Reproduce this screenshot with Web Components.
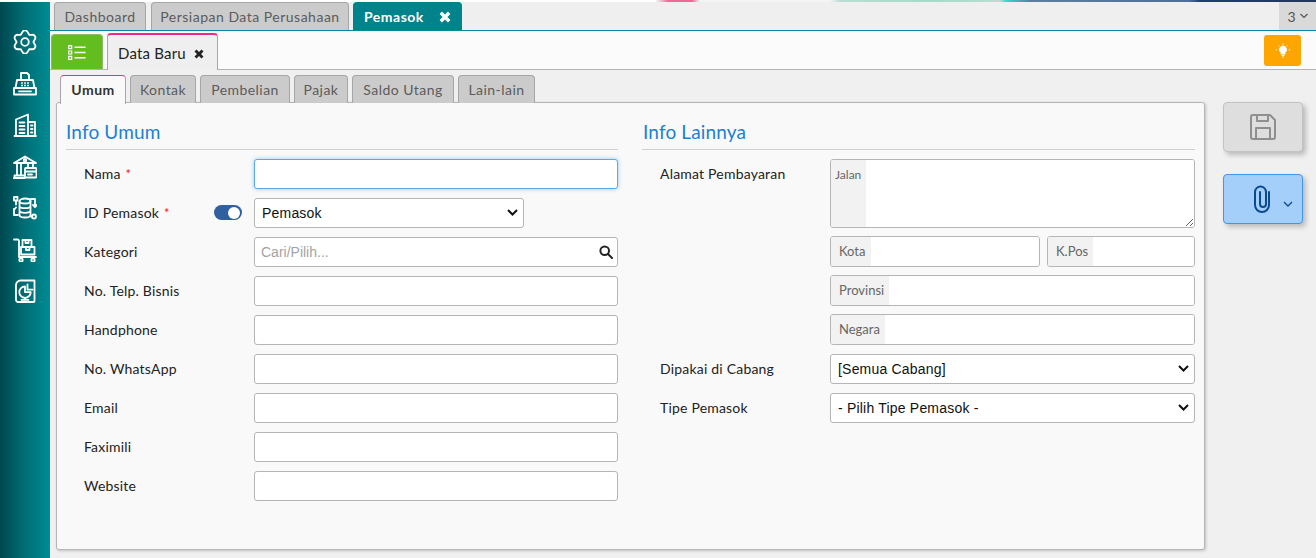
<!DOCTYPE html>
<html>
<head>
<meta charset="utf-8">
<title>Pemasok</title>
<style>
html, body { margin: 0; padding: 0; height: 100%; overflow: hidden; }
body { font-family: Lato, "Liberation Sans", sans-serif; font-size: 14px; background: #f0f0f0; color: #222; }
</style>
</head>
<body>
<app-shell>
    <side-bar slot="side"></side-bar>
    <doc-tabs slot="top"></doc-tabs>
    <tool-bar slot="top"></tool-bar>
    <sub-tabs slot="top"></sub-tabs>
    <div slot="main">
        <form-panel>
            <form-column slot="left" heading="Info Umum">
                <form-row label="Nama" required><text-box focused></text-box></form-row>
                <form-row label="ID Pemasok" required toggle><select-box width="270px" value="Pemasok"></select-box></form-row>
                <form-row label="Kategori"><search-box placeholder="Cari/Pilih..."></search-box></form-row>
                <form-row label="No. Telp. Bisnis"><text-box></text-box></form-row>
                <form-row label="Handphone"><text-box></text-box></form-row>
                <form-row label="No. WhatsApp"><text-box></text-box></form-row>
                <form-row label="Email"><text-box></text-box></form-row>
                <form-row label="Faximili"><text-box></text-box></form-row>
                <form-row label="Website"><text-box></text-box></form-row>
            </form-column>
            <form-column slot="right" heading="Info Lainnya">
                <form-row label="Alamat Pembayaran">
                    <addr-group>
                        <addon-box label="Jalan" multi></addon-box>
                        <div style="display:grid;grid-template-columns:210px 1fr;gap:7px">
                            <addon-box label="Kota"></addon-box>
                            <addon-box label="K.Pos"></addon-box>
                        </div>
                        <addon-box label="Provinsi"></addon-box>
                        <addon-box label="Negara"></addon-box>
                    </addr-group>
                </form-row>
                <form-row label="Dipakai di Cabang"><select-box value="[Semua Cabang]"></select-box></form-row>
                <form-row label="Tipe Pemasok"><select-box value="- Pilih Tipe Pemasok -"></select-box></form-row>
            </form-column>
        </form-panel>
        <side-actions></side-actions>
    </div>
</app-shell>

<script>
class Base extends HTMLElement {
    render(html) {
        let shadowRoot = this.attachShadow({ mode: 'open' })
        shadowRoot.innerHTML = html
    }
}

class AppShell extends Base {
    connectedCallback() {
        this.render(`
        <style>
            :host { display: block; height: 558px; }
            .strip {
                height: 2px;
                background: linear-gradient(90deg, #fff 0, #fff 655px, #ee6a96 668px, #ee6a96 692px, #f4f4f4 700px, #f4f4f4 830px,
                    #b9dcd4 840px, #a5dcc6 930px, #b9dcd4 1000px, #35dcc8 1006px, #5d7f9f 1030px, #4d6f96 1190px, #1f3d70 1200px, #26375a 1316px);
            }
            .row { display: flex; height: 556px; }
            .content { flex: 1; min-width: 0; display: flex; flex-direction: column; }
            ::slotted([slot=main]) { display: flex; align-items: flex-start; }
        </style>
        <div class="strip"></div>
        <div class="row">
            <slot name="side"></slot>
            <div class="content">
                <slot name="top"></slot>
                <slot name="main"></slot>
            </div>
        </div>`)
    }
}

// six lobed gear outline
function gearPath() {
    let pt = (r, deg) => {
        let a = deg * Math.PI / 180
        return (12 + r * Math.cos(a)).toFixed(2) + ' ' + (12 + r * Math.sin(a)).toFixed(2)
    }
    let d = ''
    for (let i = 0; i < 6; i++) {
        let t = i * 60 - 90
        d += (i == 0 ? 'M' : 'L') + pt(8.4, t - 30) + 'L' + pt(10.2, t - 15) + 'A2.9 2.9 0 0 1 ' + pt(10.2, t + 15)
    }
    return d + 'Z'
}

const sideIcons = [
    `<path d="${gearPath()}"/><circle cx="12" cy="12" r="3.800"/>`,
    // fax
    `<path d="M8 8V1h6l2 2v5"/><path d="M4 8h16l1.500 8h-19z"/><path d="M1 16h22v6.500H1z"/><path d="M6 19.300h12"/><path d="M9 11h.01M12 11h.01M15 11h.01M9 13.500h.01M12 13.500h.01M15 13.500h.01"/>`,
    // building
    `<path d="M1.500 23h21.500"/><path d="M3 23V6.500L15 1.500V23"/><path d="M15 9h7v14"/><path d="M6.500 9.500h5M6.500 13h5M6.500 16.500h5M6.500 20h5M18 12.500h1.500M18 16h1.500M18 19.500h1.500"/>`,
    // bank with card
    `<path d="M1 8 12 1.500 23 8z"/><circle cx="12" cy="5.300" r="1.300"/><path d="M4 9v11M8 9v11M1.500 23v-2.500h9.500M.8 23h11"/><rect x="12" y="13" width="11.500" height="9.500" rx="1"/><path d="M12 16.500h11.500M15 19.500h4"/><path d="M15 9v3M20 9v3"/>`,
    // database with arrows
    `<ellipse cx="12" cy="5" rx="5.500" ry="2.500"/><path d="M6.500 5v14c0 1.400 2.500 2.500 5.500 2.500s5.500-1.100 5.500-2.500V5M6.500 9.700c0 1.400 2.500 2.500 5.500 2.500s5.500-1.100 5.500-2.500M6.500 14.300c0 1.400 2.500 2.500 5.500 2.500s5.500-1.100 5.500-2.500"/><rect x="1" y="1" width="3.500" height="3.500"/><circle cx="21" cy="20.500" r="2"/><path d="M3 5v3.500M1 14v5h4M3 11.500 1 14l-1-1M18 3h4v6M20 9l2 2 2-2M18 20.500h1"/>`,
    // trolley with boxes
    `<path d="M1 1.500h3.500a1.500 1.500 0 0 1 1.500 1.500v16h17"/><rect x="9.500" y="2" width="9" height="7"/><path d="M12.500 2v3h3V2"/><rect x="8" y="9" width="13.500" height="7.500"/><path d="M13 9v3h3.500V9"/><circle cx="8" cy="22" r="1.700"/><circle cx="20" cy="22" r="1.700"/>`,
    // report with chart
    `<path d="M3 21V6a4.500 4.500 0 0 1 4.500-4.500H21.500V22a1 1 0 0 1-1 1H5a2 2 0 0 1-2-2z"/><path d="M12 7.500a5.700 5.700 0 1 0 5.700 5.700H12z"/><path d="M14.500 5.500v5.200h5"/><path d="M12 19v1.800M8.500 20.800h7"/>`
]
class SideBar extends Base {
    connectedCallback() {
        this.render(`
        <style>
            :host { display: flex; flex: none; width: 50px; height: 556px; flex-direction: column; align-items: center;
                padding-top: 28px; box-sizing: border-box; gap: 17.500px;
                background: linear-gradient(90deg, #00484f 0, #006b72 45%, #008c93 100%); }
            svg { width: 24px; height: 24px; fill: none; stroke: #fff; stroke-width: 1.800; stroke-linecap: round; stroke-linejoin: round; display: block; }
            svg:first-child { margin-top: -1px; margin-bottom: 1px; }
        </style>
        ${sideIcons.map(icon => `<svg viewBox="0 0 24 24">${icon}</svg>`).join('')}`)
    }
}

class DocTabs extends Base {
    connectedCallback() {
        this.render(`
        <style>
            :host { display: flex; background: #efefef; border-bottom: 1px solid #008c93; height: 28px; padding-left: 4px; gap: 5px; position: relative; letter-spacing: .5px; }
            .tab { box-sizing: border-box; height: 28px; padding: 0; text-align: center; line-height: 28px; background: #cbcbcb; color: #5b5b5b; border: 1px solid #a6a6a6; border-bottom: 0; border-radius: 4px 4px 0 0; font-size: 14px; white-space: nowrap; }
            .on { background: #00838a; border-color: #00838a; color: #fff; font-weight: 700; display: flex; justify-content: space-between; padding: 0 10px; margin-left: -1px; }
            .on svg { width: 12px; height: 12px; margin-top: 8px; fill: #fff; }
            .count { position: absolute; right: 0; top: 0; width: 37px; height: 28px; background: #d9d9d9; display: flex; align-items: center; justify-content: center; gap: 4px; color: #555; font-size: 14px; letter-spacing: 0; }
            .count svg { width: 8px; height: 6px; fill: none; stroke: #555; stroke-width: 1.200; }
        </style>
        <div class="tab" style="width:92px">Dashboard</div>
        <div class="tab" style="width:198px">Persiapan Data Perusahaan</div>
        <div class="tab on" style="width:109px">Pemasok <svg viewBox="0 0 12 12"><path d="M3 .6 6 3.600 9 .6 11.400 3 8.400 6l3 3L9 11.400l-3-3-3 3L.6 9l3-3-3-3z"/></svg></div>
        <div class="count">3 <svg viewBox="0 0 8 6"><path d="M.5 1 4 4.500 7.500 1"/></svg></div>`)
    }
}

class ToolBar extends Base {
    connectedCallback() {
        this.render(`
        <style>
            :host { display: flex; background: #fbfbfb; border-bottom: 1px solid #b3b3b3; padding: 2px 15px 0 1px; align-items: flex-end; position: relative; gap: 4px; height: 36px; }
            .menu { width: 52px; height: 35px; background: #63bd1f; border-radius: 4px 4px 0 0; border: 1px solid #8bbd66; border-bottom: 0; box-sizing: border-box; display: flex; align-items: center; justify-content: center; }
            .menu svg { width: 18px; height: 15px; fill: none; stroke: #fff; }
            .tab { box-sizing: border-box; height: 37px; margin-bottom: -1px; width: 111px; background: #efefef; border: 1px solid #a6a6a6; border-top: 2px solid #ec2a8a; border-bottom: 0; border-radius: 4px 4px 0 0; font-size: 15px; padding-left: 10px; display: flex; align-items: center; gap: 8px; color: #222; position: relative; letter-spacing: .2px; }
            .tab svg { width: 10px; height: 10px; fill: #222; margin-top: 2px; }
            .hint { margin-left: auto; margin-bottom: 3px; width: 37px; height: 31px; border-radius: 3px; background: #ffa500; display: flex; align-items: center; justify-content: center; }
            .hint svg { width: 16px; height: 16px; fill: none; stroke: #fff; stroke-width: 1; }
        </style>
        <div class="menu"><svg viewBox="0 0 18 15"><path d="M6.500 2.200h11M6.500 7.500h11M6.500 12.800h11" stroke-width="1.600"/><path d="M.7.700h3v3h-3zM.7 6h3v3h-3zM.7 11.300h3v3h-3z" stroke-width="1.200"/></svg></div>
        <div class="tab">Data Baru <svg viewBox="0 0 12 12"><path d="M3 .6 6 3.600 9 .6 11.400 3 8.400 6l3 3L9 11.400l-3-3-3 3L.6 9l3-3-3-3z"/></svg></div>
        <div class="hint"><svg viewBox="0 0 16 16"><path d="M8 3a3.600 3.600 0 0 0-2 6.500V11h4V9.500A3.600 3.600 0 0 0 8 3z" fill="#fff"/><path d="M6.500 12.500h3M7 14h2M8 .3v1.500M2.200 6.800H.6M15.400 6.800h-1.600M3.400 2.300l1.100 1.100M12.600 2.300l-1.100 1.100"/></svg></div>`)
    }
}

class SubTabs extends Base {
    connectedCallback() {
        const tabs = [['Kontak', 66], ['Pembelian', 90], ['Pajak', 54], ['Saldo Utang', 102], ['Lain-lain', 77]]
        this.render(`
        <style>
            :host { display: flex; gap: 4px; padding: 5px 0 0 10px; height: 28px; position: relative; z-index: 1; letter-spacing: .45px; font-size: 14px; margin-bottom: -1px; }
            .tab { box-sizing: border-box; height: 28px; text-align: center; line-height: 27px; background: #cbcbcb; color: #5b5b5b; border: 1px solid #a6a6a6; border-bottom: 0; border-radius: 4px 4px 0 0; white-space: nowrap; }
            .on { height: 29px; background: #f9f9f9; color: #333; font-weight: 700; border-top: 1px solid #ec2a8a; }
        </style>
        <div class="tab on" style="width:66px">Umum</div>
        ${tabs.map(([name, width]) => `<div class="tab" style="width:${width}px">${name}</div>`).join('')}`)
    }
}

class FormPanel extends Base {
    connectedCallback() {
        this.render(`
        <style>
            :host { display: grid; grid-template-columns: 552px 553px; gap: 24px; box-sizing: border-box; width: 1149px; height: 448px; margin: 0 18px 0 6px; padding: 9px 9px 0 9px; background: #f9f9f9; border: 1px solid #b5b5b5; border-radius: 3px; box-shadow: 1px 1px 3px rgba(0,0,0,.2); flex: none; align-content: start; }
        </style>
        <slot name="left"></slot>
        <slot name="right"></slot>`)
    }
}

class FormColumn extends Base {
    connectedCallback() {
        const indent = this.getAttribute('slot') == 'right' ? 1 : 0
        this.render(`
        <style>
            :host { display: block; }
            h2 { margin: 0 0 9px; padding: 8px 0 6px ${indent}px; height: 38px; box-sizing: border-box; border-bottom: 1px solid #cfcfd6; font-size: 19px; line-height: 24px; font-weight: 400; color: #1b7fd6; letter-spacing: .15px; }
            .rows { display: flex; flex-direction: column; gap: 9px; }
        </style>
        <h2>${this.getAttribute('heading')}</h2>
        <div class="rows"><slot></slot></div>`)
    }
}

class FormRow extends Base {
    connectedCallback() {
        const required = this.hasAttribute('required') ? '<span class="req">*</span>' : ''
        const toggle = this.hasAttribute('toggle') ? '<span class="toggle"></span>' : ''
        this.render(`
        <style>
            :host { display: grid; grid-template-columns: 188px 1fr; align-items: start; }
            .label { position: relative; height: 30px; line-height: 29px; padding-left: 18px; letter-spacing: .2px; font-size: 14px; color: #222; }
            .req { color: #f02030; margin-left: 1px; font-size: 13px; }
            .toggle { position: absolute; left: 148px; top: 7px; width: 28px; height: 15px; border-radius: 8px; background: #30609f; }
            .toggle::after { content: ''; position: absolute; right: 2px; top: 1.500px; width: 12px; height: 12px; border-radius: 50%; background: #fff; }
        </style>
        <div class="label">${this.getAttribute('label')} ${required}${toggle}</div>
        <div><slot></slot></div>`)
    }
}

const fieldCss = `
    input, select, textarea { font: 14px "Liberation Sans", Arial, sans-serif; box-sizing: border-box; outline: none; }
    input { display: block; width: 100%; height: 30px; border: 1px solid #b5b5b5; border-radius: 3px; background: #fff; padding: 0 6px; }
`

class TextBox extends Base {
    connectedCallback() {
        this.render(`
        <style>
            :host { display: block; }
            ${fieldCss}
            input.focus { border-color: #5aa9e6; box-shadow: 0 0 4px rgba(90,169,230,.6); }
        </style>
        <input type="text" class="${this.hasAttribute('focused') ? 'focus' : ''}">`)
    }
}

class SelectBox extends Base {
    connectedCallback() {
        const width = this.getAttribute('width') || '100%'
        this.render(`
        <style>
            :host { display: block; }
            ${fieldCss}
            .wrap { position: relative; width: ${width}; }
            select { display: block; width: 100%; height: 30px; appearance: none; border: 1px solid #b5b5b5; border-radius: 3px; background: #fff; color: #111; padding: 0 24px 0 7px; letter-spacing: .2px; }
            svg { position: absolute; right: 6px; top: 11px; width: 11px; height: 7px; fill: none; stroke: #111; stroke-width: 2; pointer-events: none; }
        </style>
        <div class="wrap">
            <select><option>${this.getAttribute('value')}</option></select>
            <svg viewBox="0 0 11 7"><path d="M1 1l4.500 4.500L10 1"/></svg>
        </div>`)
    }
}

class SearchBox extends Base {
    connectedCallback() {
        this.render(`
        <style>
            :host { display: block; position: relative; }
            ${fieldCss}
            input::placeholder { color: #a3a3a3; opacity: 1; }
            svg { position: absolute; right: 5px; top: 8px; width: 14px; height: 14px; fill: none; stroke: #222; stroke-width: 2; }
        </style>
        <input type="text" placeholder="${this.getAttribute('placeholder')}">
        <svg viewBox="0 0 14 14"><circle cx="5.700" cy="5.700" r="4.300"/><path d="M9 9l4 4" stroke-linecap="round"/></svg>`)
    }
}

class AddrGroup extends Base {
    connectedCallback() {
        this.render(`
        <style>
            :host { display: flex; flex-direction: column; gap: 8px; }
        </style>
        <slot></slot>`)
    }
}

class AddonBox extends Base {
    connectedCallback() {
        const multi = this.hasAttribute('multi')
        this.render(`
        <style>
            :host { display: flex; box-sizing: border-box; height: ${multi ? '69px' : '31px'}; border: 1px solid #b5b5b5; border-radius: 3px; background: #fff; overflow: hidden; }
            .name { flex: none; background: #f2f2f2; color: #666; font-size: ${multi ? '12px' : '13px'}; padding: ${multi ? '7px 5px 0 4px' : '6px 5px 0 8px'}; }
            textarea { flex: 1; border: 0; padding: 0; min-width: 0; background: #fff; resize: vertical; }
            input { flex: 1; border: 0; min-width: 0; }
            input, textarea { font: 14px "Liberation Sans", sans-serif; outline: none; box-sizing: border-box; }
        </style>
        <div class="name">${this.getAttribute('label')}</div>
        ${multi ? '<textarea></textarea>' : '<input type="text">'}`)
    }
}

class SideActions extends Base {
    connectedCallback() {
        this.render(`
        <style>
            :host { display: flex; flex-direction: column; gap: 22px; flex: none; width: 80px; }
            .btn { box-sizing: border-box; width: 80px; height: 50px; border-radius: 4px; display: flex; align-items: center; justify-content: center; box-shadow: 3px 3px 5px rgba(0,0,0,.22); position: relative; }
            .save { background: #dedede; border: 1px solid #c3c3c3; }
            .save svg { width: 28px; height: 28px; fill: none; stroke: #8f8f8f; stroke-width: 2; stroke-linejoin: round; }
            .attach { background: #a4cffa; border: 1px solid #3f97ee; }
            .attach .clip { width: 20px; height: 28px; fill: none; stroke: #0c4a90; stroke-width: 2; stroke-linecap: round; position: relative; left: -1px; }
            .attach .chev { position: absolute; right: 9px; top: 26px; width: 10px; height: 6px; fill: none; stroke: #0c4a90; stroke-width: 1.300; }
        </style>
        <div class="btn save"><svg viewBox="0 0 28 28"><path d="M2 4a2 2 0 0 1 2-2h17l5 5v17a2 2 0 0 1-2 2H4a2 2 0 0 1-2-2z"/><path d="M8 2v6h11V2M7 26V15h14v11"/></svg></div>
        <div class="btn attach">
            <svg class="clip" viewBox="0 0 20 28"><path d="M17 7v13a7 7 0 0 1-14 0V7a5.500 5.500 0 0 1 11 0v12a3 3 0 0 1-6 0V7"/></svg>
            <svg class="chev" viewBox="0 0 10 6"><path d="M1 1l4 4 4-4"/></svg>
        </div>`)
    }
}

customElements.define('app-shell', AppShell)
customElements.define('side-bar', SideBar)
customElements.define('doc-tabs', DocTabs)
customElements.define('tool-bar', ToolBar)
customElements.define('sub-tabs', SubTabs)
customElements.define('form-panel', FormPanel)
customElements.define('form-column', FormColumn)
customElements.define('form-row', FormRow)
customElements.define('text-box', TextBox)
customElements.define('select-box', SelectBox)
customElements.define('search-box', SearchBox)
customElements.define('addr-group', AddrGroup)
customElements.define('addon-box', AddonBox)
customElements.define('side-actions', SideActions)
</script>
</body>
</html>
